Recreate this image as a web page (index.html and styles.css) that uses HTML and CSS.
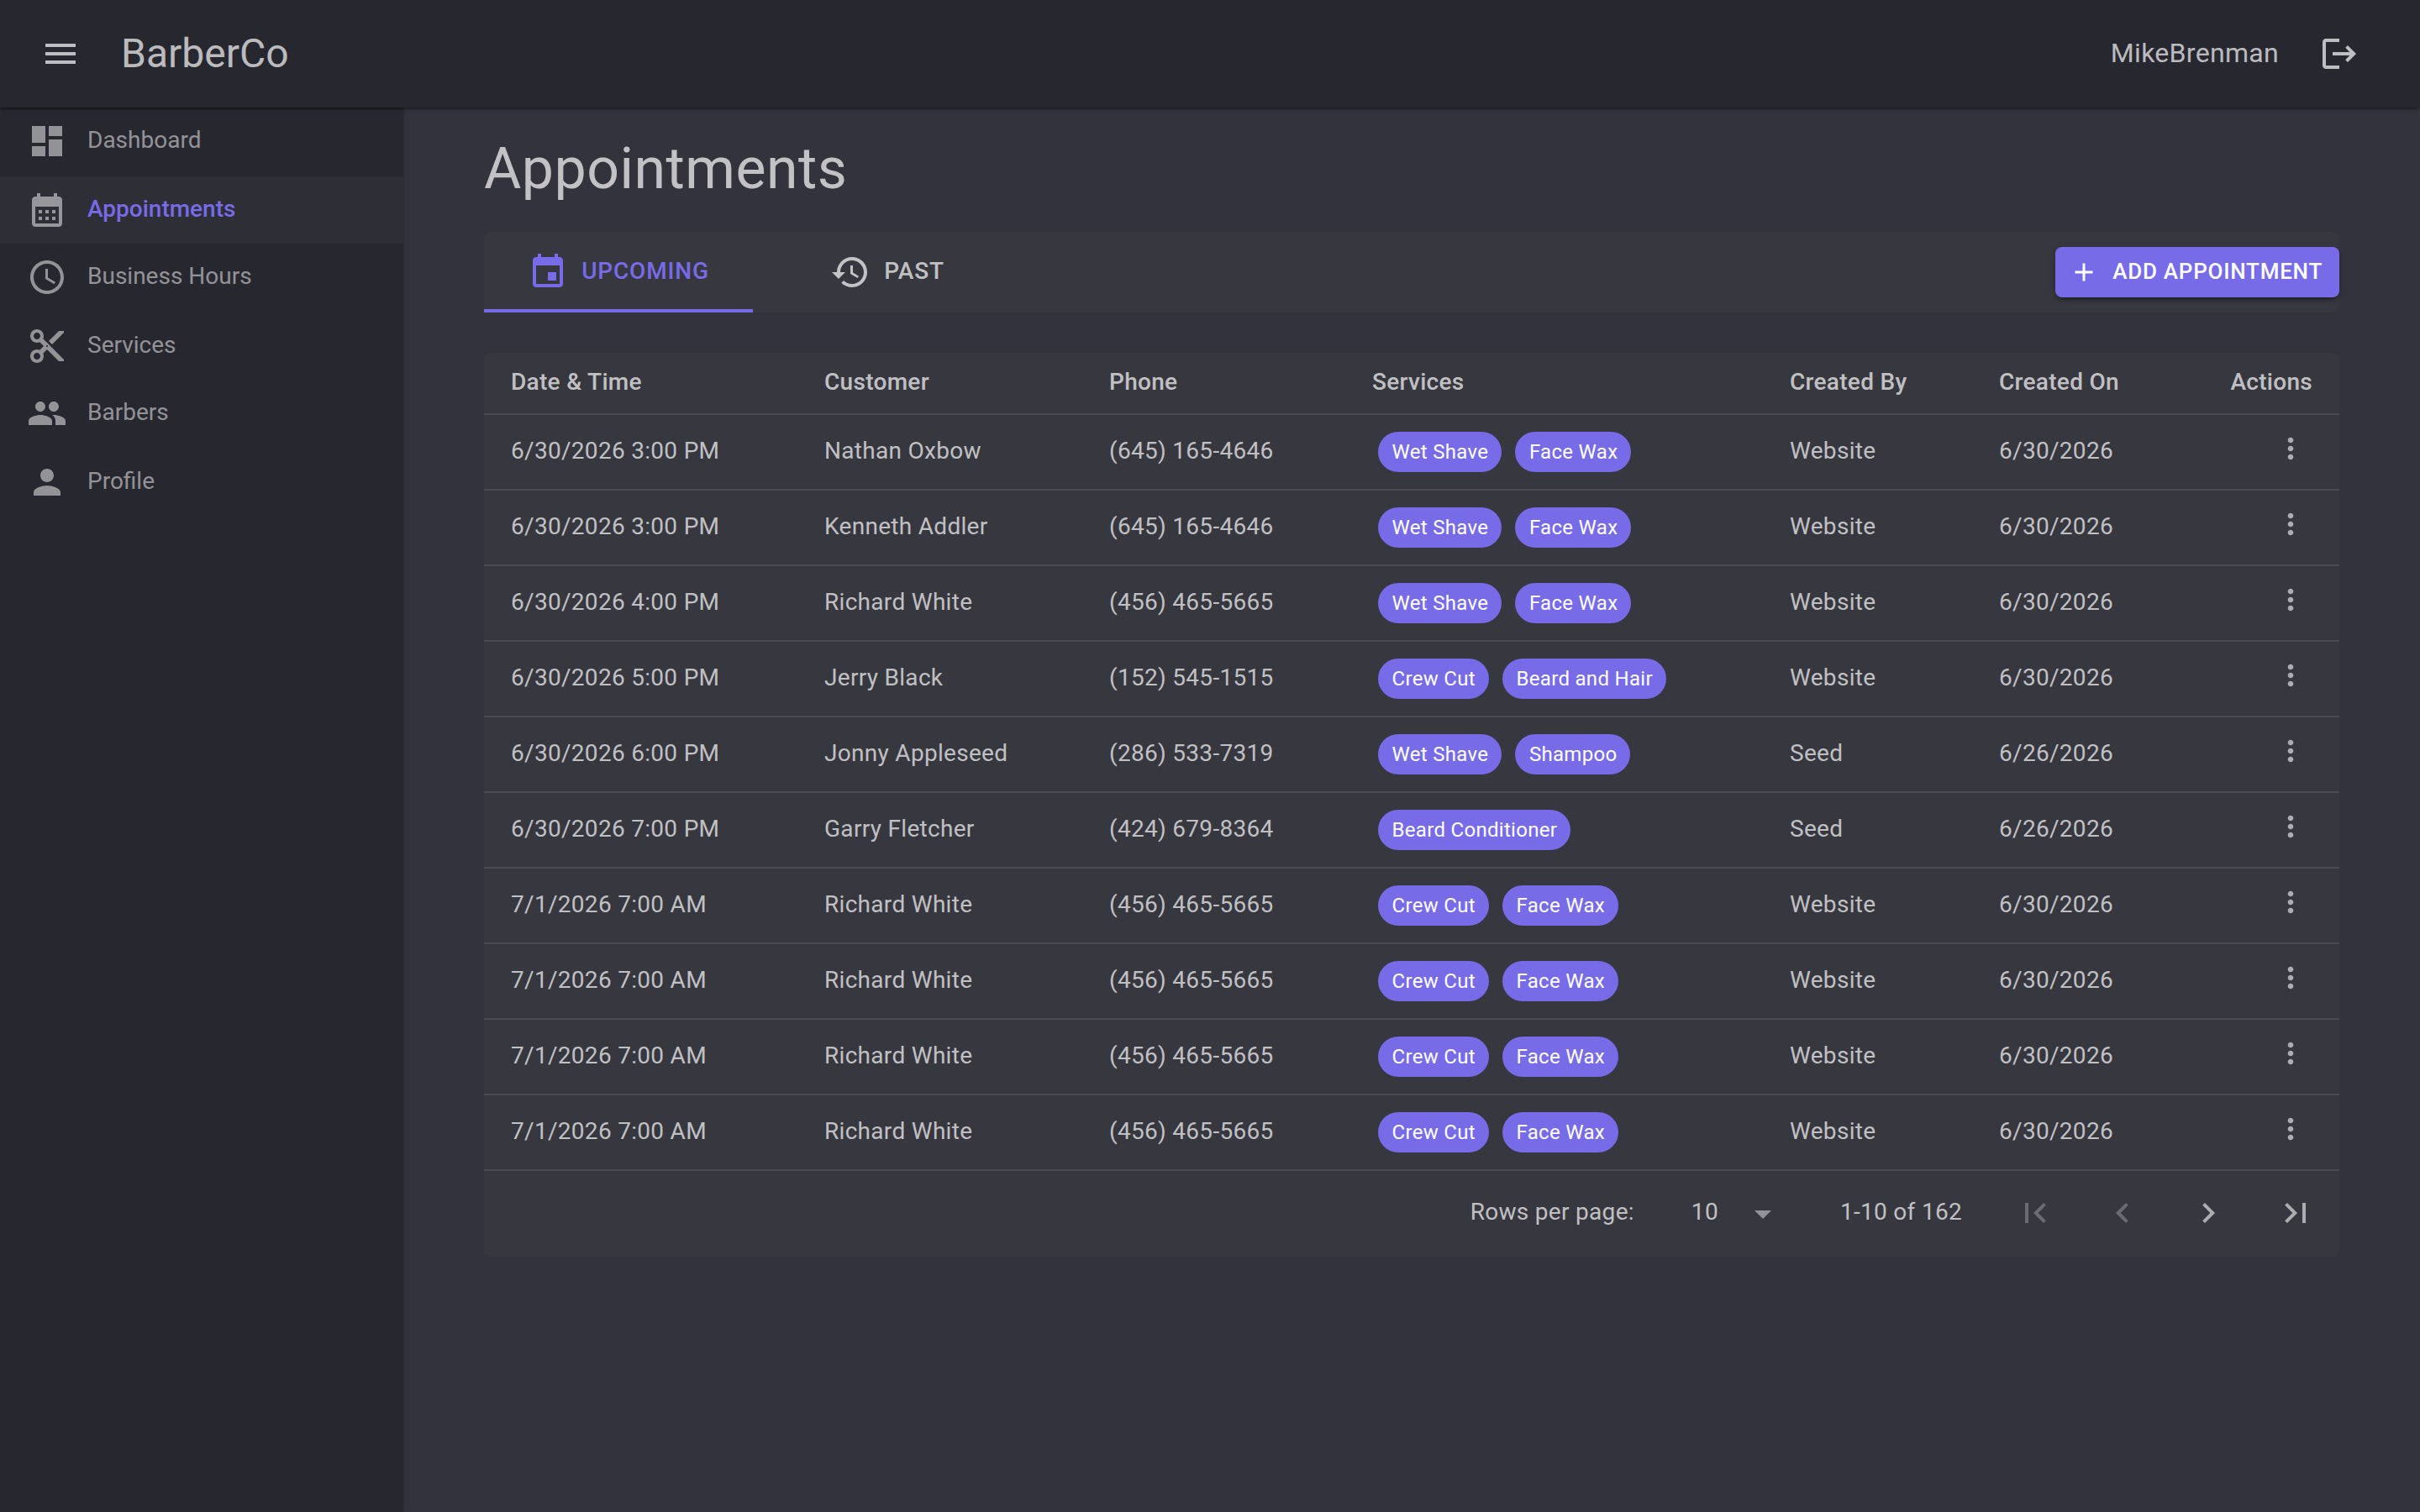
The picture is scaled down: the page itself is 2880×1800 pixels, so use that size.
FILE: index.html
```html
<!DOCTYPE html>
<html lang="en">
<head>
<meta charset="utf-8">
<title>BarberCo – Appointments</title>
<link rel="stylesheet" href="styles.css">
</head>
<body>
<header class="appbar">
  <svg class="icon" viewBox="0 0 24 24"><path d="M3 18h18v-2H3v2zm0-5h18v-2H3v2zm0-7v2h18V6H3z"/></svg>
  <span class="brand">BarberCo</span>
  <span class="user">MikeBrenman</span>
  <svg class="icon" viewBox="0 0 24 24"><path d="m17 7-1.41 1.41L18.17 11H8v2h10.17l-2.58 2.58L17 17l5-5zM4 5h8V3H4c-1.1 0-2 .9-2 2v14c0 1.1.9 2 2 2h8v-2H4V5z"/></svg>
</header>
<div class="layout">
  <nav class="drawer">
    <a class="nav-link"><svg class="icon" viewBox="0 0 24 24"><path d="M3 13h8V3H3v10zm0 8h8v-6H3v6zm10 0h8V11h-8v10zm0-18v6h8V3h-8z"/></svg><span>Dashboard</span></a>
    <a class="nav-link active"><svg class="icon" viewBox="0 0 24 24"><path d="M19 4h-1V2h-2v2H8V2H6v2H5c-1.11 0-1.99.9-1.99 2L3 20c0 1.1.89 2 2 2h14c1.1 0 2-.9 2-2V6c0-1.1-.9-2-2-2zm0 16H5V10h14v10zM9 14H7v-2h2v2zm4 0h-2v-2h2v2zm4 0h-2v-2h2v2zm-8 4H7v-2h2v2zm4 0h-2v-2h2v2zm4 0h-2v-2h2v2z"/></svg><span>Appointments</span></a>
    <a class="nav-link"><svg class="icon" viewBox="0 0 24 24"><path d="M11.99 2C6.47 2 2 6.48 2 12s4.47 10 9.99 10C17.52 22 22 17.52 22 12S17.52 2 11.99 2zM12 20c-4.42 0-8-3.58-8-8s3.58-8 8-8 8 3.58 8 8-3.58 8-8 8zm.5-13H11v6l5.25 3.15.75-1.23-4.5-2.67z"/></svg><span>Business Hours</span></a>
    <a class="nav-link"><svg class="icon" viewBox="0 0 24 24"><path d="M9.64 7.64c.23-.5.36-1.05.36-1.64 0-2.21-1.79-4-4-4S2 3.79 2 6s1.79 4 4 4c.59 0 1.14-.13 1.64-.36L10 12l-2.36 2.36C7.14 14.13 6.59 14 6 14c-2.21 0-4 1.79-4 4s1.79 4 4 4 4-1.79 4-4c0-.59-.13-1.14-.36-1.64L12 14l7 7h3v-1L9.64 7.64zM6 8c-1.1 0-2-.89-2-2s.9-2 2-2 2 .89 2 2-.9 2-2 2zm0 12c-1.1 0-2-.89-2-2s.9-2 2-2 2 .89 2 2-.9 2-2 2zm6-7.5c-.28 0-.5-.22-.5-.5s.22-.5.5-.5.5.22.5.5-.22.5-.5.5zM19 3l-6 6 2 2 7-7V3z"/></svg><span>Services</span></a>
    <a class="nav-link"><svg class="icon" viewBox="0 0 24 24"><path d="M16 11c1.66 0 2.99-1.34 2.99-3S17.66 5 16 5c-1.66 0-3 1.34-3 3s1.34 3 3 3zm-8 0c1.66 0 2.99-1.34 2.99-3S9.66 5 8 5C6.34 5 5 6.34 5 8s1.34 3 3 3zm0 2c-2.33 0-7 1.17-7 3.5V19h14v-2.5c0-2.33-4.67-3.5-7-3.5zm8 0c-.29 0-.62.02-.97.05 1.16.84 1.97 1.97 1.97 3.45V19h6v-2.5c0-2.33-4.67-3.5-7-3.5z"/></svg><span>Barbers</span></a>
    <a class="nav-link"><svg class="icon" viewBox="0 0 24 24"><path d="M12 12c2.21 0 4-1.79 4-4s-1.79-4-4-4-4 1.79-4 4 1.79 4 4 4zm0 2c-2.67 0-8 1.34-8 4v2h16v-2c0-2.66-5.33-4-8-4z"/></svg><span>Profile</span></a>
  </nav>
  <main class="content">
    <h1 class="title">Appointments</h1>
    <div class="tabs">
      <div class="tab selected"><svg class="icon" viewBox="0 0 24 24"><path d="M17 12h-5v5h5v-5zM16 1v2H8V1H6v2H5c-1.11 0-1.99.9-1.99 2L3 19c0 1.1.89 2 2 2h14c1.1 0 2-.9 2-2V5c0-1.1-.9-2-2-2h-1V1h-2zm3 18H5V8h14v11z"/></svg><span>UPCOMING</span></div>
      <div class="tab"><svg class="icon" viewBox="0 0 24 24"><path d="M13 3c-4.97 0-9 4.03-9 9H1l3.89 3.89.07.14L9 12H6c0-3.87 3.13-7 7-7s7 3.13 7 7-3.13 7-7 7c-1.93 0-3.68-.79-4.94-2.06l-1.42 1.42C8.27 19.99 10.51 21 13 21c4.97 0 9-4.03 9-9s-4.03-9-9-9zm-1 5v5l4.28 2.54.72-1.21-3.5-2.08V8H12z"/></svg><span>PAST</span></div>
      <button class="add"><svg class="icon small" viewBox="0 0 24 24"><path d="M19 13h-6v6h-2v-6H5v-2h6V5h2v6h6v2z"/></svg><span>ADD APPOINTMENT</span></button>
    </div>
    <section class="panel">
      <table class="grid">
        <colgroup><col class="c-date"><col class="c-customer"><col class="c-phone"><col class="c-services"><col class="c-by"><col class="c-on"><col class="c-actions"></colgroup>
        <thead><tr><th>Date &amp; Time</th><th>Customer</th><th>Phone</th><th>Services</th><th>Created By</th><th>Created On</th><th class="end">Actions</th></tr></thead>
        <tbody id="rows"></tbody>
      </table>
      <footer class="pager">
        <span class="pager-label">Rows per page:</span>
        <span class="pager-select">10<svg class="icon" viewBox="0 0 24 24"><path d="M7 10l5 5 5-5z"/></svg></span>
        <span class="pager-info">1-10 of 162</span>
        <div class="pager-nav">
          <div class="pager-pair">
            <svg class="icon off" viewBox="0 0 24 24"><path d="M18.41 16.59L13.82 12l4.59-4.59L17 6l-6 6 6 6zM6 6h2v12H6z"/></svg>
            <svg class="icon off" viewBox="0 0 24 24"><path d="M15.41 7.41L14 6l-6 6 6 6 1.41-1.41L10.83 12z"/></svg>
          </div>
          <div class="pager-pair">
            <svg class="icon" viewBox="0 0 24 24"><path d="M10 6L8.59 7.41 13.17 12l-4.58 4.59L10 18l6-6z"/></svg>
            <svg class="icon" viewBox="0 0 24 24"><path d="M5.59 7.41L10.18 12l-4.59 4.59L7 18l6-6-6-6zM16 6h2v12h-2z"/></svg>
          </div>
        </div>
      </footer>
    </section>
  </main>
</div>
<script src="app.js"></script>
</body>
</html>
```
FILE: app.js
```js
const appointments = [
  ["6/30/2026 3:00 PM", "Nathan Oxbow", "(645) 165-4646", ["Wet Shave", "Face Wax"], "Website", "6/30/2026"],
  ["6/30/2026 3:00 PM", "Kenneth Addler", "(645) 165-4646", ["Wet Shave", "Face Wax"], "Website", "6/30/2026"],
  ["6/30/2026 4:00 PM", "Richard White", "(456) 465-5665", ["Wet Shave", "Face Wax"], "Website", "6/30/2026"],
  ["6/30/2026 5:00 PM", "Jerry Black", "(152) 545-1515", ["Crew Cut", "Beard and Hair"], "Website", "6/30/2026"],
  ["6/30/2026 6:00 PM", "Jonny Appleseed", "(286) 533-7319", ["Wet Shave", "Shampoo"], "Seed", "6/26/2026"],
  ["6/30/2026 7:00 PM", "Garry Fletcher", "(424) 679-8364", ["Beard Conditioner"], "Seed", "6/26/2026"],
  ["7/1/2026 7:00 AM", "Richard White", "(456) 465-5665", ["Crew Cut", "Face Wax"], "Website", "6/30/2026"],
  ["7/1/2026 7:00 AM", "Richard White", "(456) 465-5665", ["Crew Cut", "Face Wax"], "Website", "6/30/2026"],
  ["7/1/2026 7:00 AM", "Richard White", "(456) 465-5665", ["Crew Cut", "Face Wax"], "Website", "6/30/2026"],
  ["7/1/2026 7:00 AM", "Richard White", "(456) 465-5665", ["Crew Cut", "Face Wax"], "Website", "6/30/2026"]
];

const moreIcon = '<svg class="icon more" viewBox="0 0 24 24"><path d="M12 8c1.1 0 2-.9 2-2s-.9-2-2-2-2 .9-2 2 .9 2 2 2zm0 2c-1.1 0-2 .9-2 2s.9 2 2 2 2-.9 2-2-.9-2-2-2zm0 6c-1.1 0-2 .9-2 2s.9 2 2 2 2-.9 2-2-.9-2-2-2z"/></svg>';

document.getElementById("rows").innerHTML = appointments.map(([when, customer, phone, services, by, on]) =>
  `<tr><td>${when}</td><td>${customer}</td><td>${phone}</td>` +
  `<td><div class="chips">${services.map(s => `<span class="chip">${s}</span>`).join("")}</div></td>` +
  `<td>${by}</td><td>${on}</td><td class="actions">${moreIcon}</td></tr>`).join("");
```
FILE: styles.css
```css
* { box-sizing: border-box; }

body {
  margin: 0;
  height: 1800px;
  display: flex;
  flex-direction: column;
  overflow: hidden;
  background: #32333d;
  color: rgba(255, 255, 255, .7);
  font: 400 28px/40px Roboto, "Liberation Sans", sans-serif;
  letter-spacing: .01071em;
}

.icon { width: 48px; height: 48px; flex: none; display: block; fill: currentColor; }
.icon.small { width: 36px; height: 36px; }

.appbar {
  position: relative;
  z-index: 2;
  flex: none;
  height: 128px;
  padding: 0 72px 0 48px;
  display: flex;
  align-items: center;
  background: #27272f;
  box-shadow: 0 4px 2px -2px rgba(0, 0, 0, .2), 0 2px 2px rgba(0, 0, 0, .14), 0 2px 6px rgba(0, 0, 0, .12);
}
.brand { margin-left: 48px; font-size: 48px; line-height: 64px; letter-spacing: 0; }
.user { margin: 0 48px 2px auto; font-size: 32px; line-height: 48px; letter-spacing: .00938em; }

.layout { flex: 1; display: flex; }

.drawer {
  width: 480px;
  flex: none;
  background: #27272f;
  color: rgba(255, 255, 255, .5);
  letter-spacing: 0;
  box-shadow: 0 4px 2px -2px rgba(0, 0, 0, .2), 0 2px 2px rgba(0, 0, 0, .14), 0 2px 6px rgba(0, 0, 0, .12);
}
.nav-link { height: 82px; padding: 16px 32px; display: flex; align-items: flex-start; gap: 24px; }
.nav-link:nth-child(even) { height: 80px; }
.nav-link span { line-height: 46px; }
.nav-link.active { background: #2e2e37; }
.nav-link.active span { color: #776be7; font-weight: 500; }

.content { flex: 1; padding: 31px 96px; }
.title { margin: 0 0 33px; font-size: 68px; line-height: 84px; font-weight: 400; letter-spacing: .00735em; }

.tabs { height: 96px; display: flex; align-items: center; background: #373740; border-radius: 8px; }
.tab {
  width: 320px;
  height: 96px;
  display: flex;
  align-items: center;
  justify-content: center;
  gap: 16px;
  font-weight: 500;
  letter-spacing: .02857em;
}
.tab span { margin-bottom: 2px; }
.tab.selected { color: #776be7; box-shadow: inset 0 -4px #776be7; }
.add {
  height: 60px;
  margin-left: auto;
  padding: 0 20px 0 16px;
  display: flex;
  align-items: center;
  gap: 16px;
  border: 0;
  border-radius: 8px;
  background: #776be7;
  color: #fff;
  font: 500 26px/44px Roboto, "Liberation Sans", sans-serif;
  letter-spacing: .02857em;
  box-shadow: 0 6px 2px -4px rgba(0, 0, 0, .2), 0 4px 4px rgba(0, 0, 0, .14), 0 2px 10px rgba(0, 0, 0, .12);
}
.add span { margin-bottom: 2px; }

.panel { margin-top: 48px; background: #373740; border-radius: 8px; }
.grid { width: 2208px; table-layout: fixed; border-collapse: separate; border-spacing: 0; }
.c-date { width: 373px; }
.c-customer { width: 339px; }
.c-phone { width: 313px; }
.c-services { width: 497px; }
.c-by { width: 249px; }
.c-on { width: 275px; }
.c-actions { width: 162px; }
.grid th, .grid td { border-bottom: 2px solid #4b4b54; text-align: left; white-space: nowrap; }
.grid th { height: 74px; padding: 0 32px 3px; font-weight: 500; }
.grid td { height: 90px; padding: 0 32px 2px; }
.grid .end { text-align: right; }
.chips { display: flex; gap: 16px; padding: 2px 7px 0; }
.chip { height: 48px; padding: 0 16px 0 16.6px; border-radius: 24px; background: #776be7; color: #fff; font-size: 24px; line-height: 48px; }
.more { width: 40px; height: 40px; margin: -6px 6px 0 auto; color: #adadb1; }

.pager { height: 102px; padding: 0 28px 2px 0; display: flex; align-items: center; justify-content: flex-end; }
.pager > span { padding-bottom: 2px; }
.pager-label { margin-right: 68px; }
.pager-select { margin-right: 68px; display: flex; align-items: center; gap: 29px; }
.pager-select .icon { margin-top: 2px; margin-bottom: -2px; color: #92929a; }
.pager-info { margin-right: 63px; }
.pager-nav { display: flex; gap: 54px; color: #adadb1; }
.pager-pair { display: flex; gap: 56px; }
.pager-nav .off { color: #6b6b72; }
```
